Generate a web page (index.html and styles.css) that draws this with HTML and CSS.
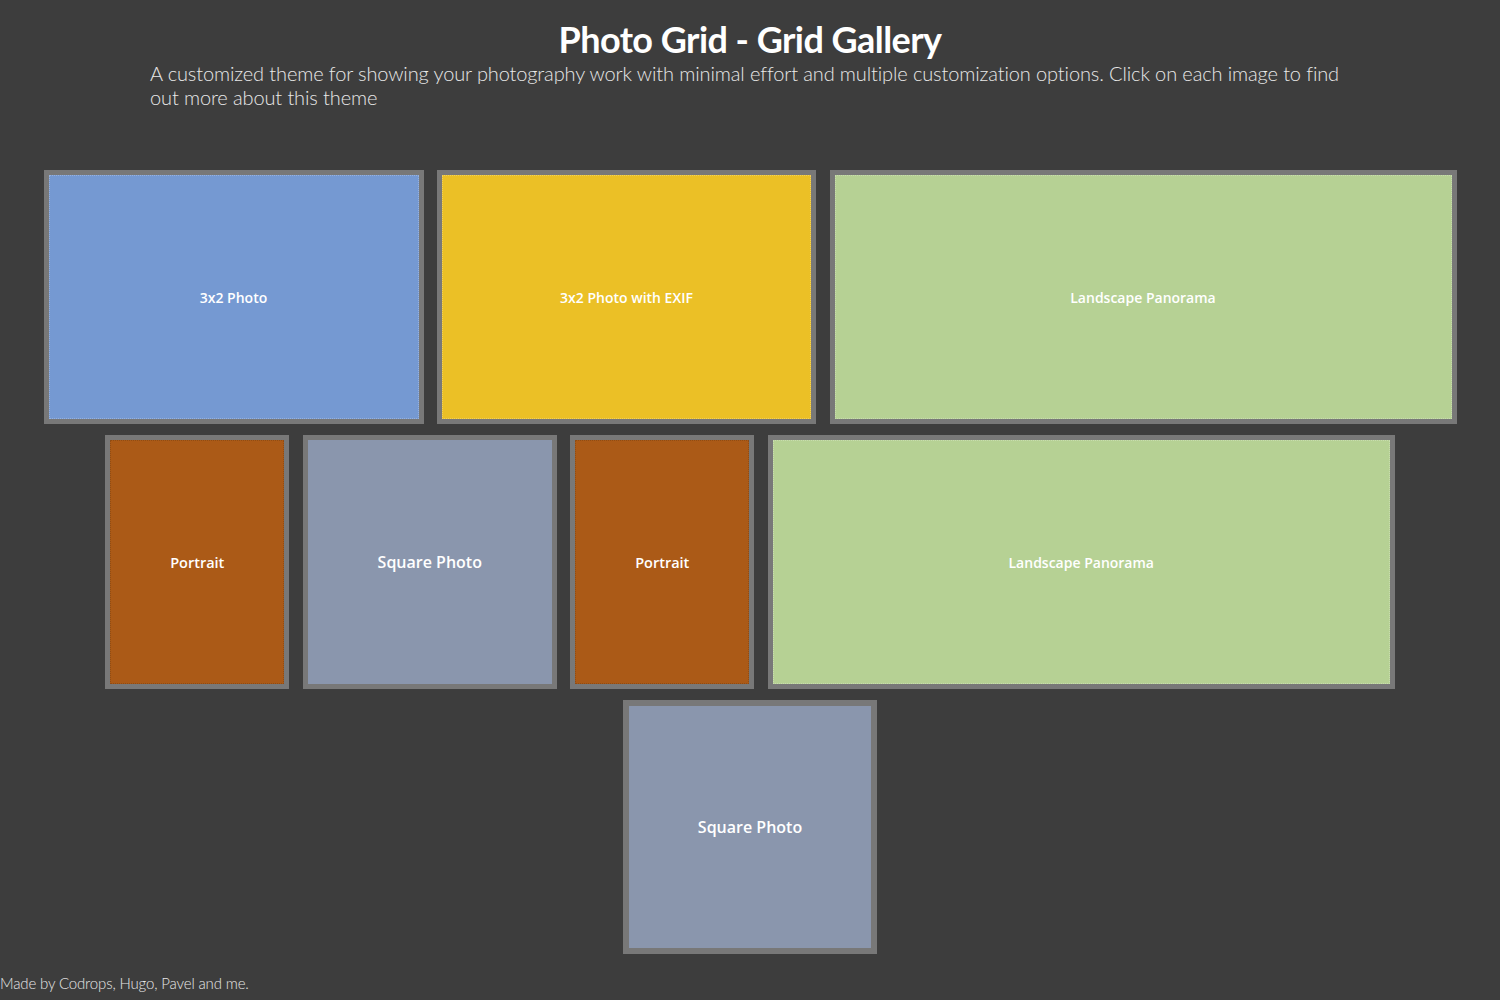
FILE: index.html
```html
<!DOCTYPE html>
<html lang="en">
<head>
<meta charset="utf-8">
<title>Photo Grid - Grid Gallery</title>
<link rel="stylesheet" href="styles.css">
</head>
<body>
<header class="intro">
  <h1 class="title">Photo Grid - Grid Gallery</h1>
  <p class="lead">A customized theme for showing your photography work with minimal effort and multiple customization options. Click on each image to find out more about this theme</p>
</header>
<main class="gallery">
  <div class="row">
    <a class="card w-380"><div class="pic blue lbl-sm">3x2 Photo</div></a>
    <a class="card w-379"><div class="pic yellow lbl-sm">3x2 Photo with EXIF</div></a>
    <a class="card w-627"><div class="pic green lbl-sm">Landscape Panorama</div></a>
  </div>
  <div class="row">
    <a class="card w-184"><div class="pic orange lbl-md">Portrait</div></a>
    <a class="card w-254"><div class="pic slate lbl-lg">Square Photo</div></a>
    <a class="card w-184"><div class="pic orange lbl-md">Portrait</div></a>
    <a class="card w-627"><div class="pic green lbl-sm">Landscape Panorama</div></a>
  </div>
  <div class="row">
    <a class="card w-254 thick"><div class="pic slate lbl-lg">Square Photo</div></a>
  </div>
</main>
<footer class="credit">Made by Codrops, Hugo, Pavel and me.</footer>
</body>
</html>
```
FILE: styles.css
```css
html, body {
  margin: 0;
  padding: 0;
}
body {
  background: #3d3d3d;
  color: #e6e6e6;
  font-family: Lato, "Open Sans", sans-serif;
  width: 1500px;
  min-height: 1000px;
}
.intro {
  width: 1200px;
  margin: 0 auto;
  padding-top: 18px;
}
.title {
  margin: 0;
  text-align: center;
  font-family: Lato, sans-serif;
  font-weight: 700;
  font-size: 36px;
  line-height: 43px;
  color: #ffffff;
  letter-spacing: -0.55px;
}
.lead {
  margin: 0;
  font-family: Lato, sans-serif;
  font-weight: 300;
  font-size: 20px;
  line-height: 24px;
  color: #e8e8e8;
  letter-spacing: -0.12px;
}
.gallery {
  margin-top: 61px;
  display: flex;
  flex-direction: column;
  gap: 11px;
}
.row {
  display: flex;
  justify-content: center;
  gap: 13.5px;
}
.card {
  box-sizing: border-box;
  height: 254px;
  border: 5px solid #787878;
  background: #787878;
  display: flex;
}
.card.thick {
  border-width: 6px;
}
.w-380 { width: 380px; }
.w-379 { width: 379px; }
.w-627 { width: 627px; }
.w-184 { width: 184px; }
.w-254 { width: 254px; }
.pic {
  flex: 1;
  display: flex;
  align-items: center;
  justify-content: center;
  color: #ffffff;
  font-family: "Open Sans", "Noto Sans", sans-serif;
  font-weight: 600;
  box-sizing: border-box;
  border: 1px dotted rgba(255, 255, 255, 0.25);
}
.lbl-sm { font-size: 14px; }
.lbl-md { font-size: 14.5px; }
.lbl-lg { font-size: 16px; }
.blue { background: #7599d2; }
.yellow { background: #ebc026; }
.green { background: #b6d194; }
.orange { background: #ab5a17; border-color: rgba(0, 0, 0, 0.15); }
.slate { background: #8a96ad; border-style: solid; border-color: #8a96ad; }
.credit {
  margin-top: 20px;
  font-family: Lato, sans-serif;
  font-weight: 300;
  font-size: 15px;
  line-height: 18px;
  color: #e6e6e6;
  letter-spacing: -0.15px;
}
```
